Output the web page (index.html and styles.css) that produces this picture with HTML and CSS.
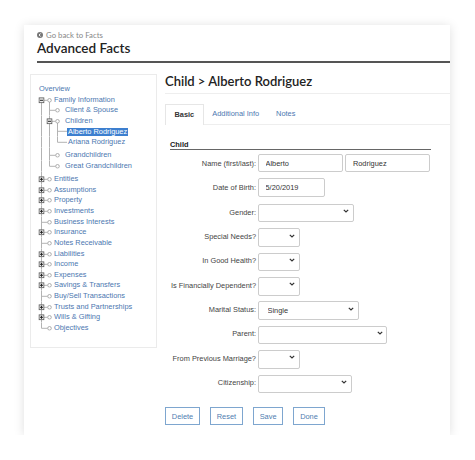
FILE: index.html
```html
<!DOCTYPE html>
<html lang="en">
<head>
  <meta charset="UTF-8">
  <meta name="viewport" content="width=device-width, initial-scale=1.0">
  <title>Advanced Facts</title>
  <link rel="stylesheet" href="styles.css">
</head>
<body>

  <!-- shared tree glyphs -->
  <svg class="defs" aria-hidden="true">
    <symbol id="plus" viewBox="0 0 6 6"><rect x=".5" y=".5" width="5" height="5" fill="#eee" stroke="#555"/><path d="M1.5 3h3M3 1.5v3" stroke="#222"/></symbol>
    <symbol id="minus" viewBox="0 0 6 6"><rect x=".5" y=".5" width="5" height="5" fill="#eee" stroke="#555"/><path d="M1.5 3h3" stroke="#222"/></symbol>
    <symbol id="node" viewBox="0 0 5 5"><circle cx="2.5" cy="2.5" r="1.8" fill="#fff" stroke="#999" stroke-width=".8"/></symbol>
  </svg>

  <div class="card">

    <!-- Header -->
    <div class="header">
      <a class="back" href="#">
        <svg width="6" height="6" viewBox="0 0 6 6"><circle cx="3" cy="3" r="3" fill="#777"/><path d="M3.6 1.5L2.1 3l1.5 1.5" stroke="#fff" stroke-width="1" fill="none"/></svg>
        Go back to Facts
      </a>
      <h1>Advanced Facts</h1>
    </div>

    <div class="body">

      <!-- Tree -->
      <div class="sidebar">
        <div class="row top"><span class="label">Overview</span></div>

        <div class="row"><svg class="ln" width="17" height="10.65"><path d="M4.5 5.3V10.65M7 5.3H10.5M12.5 7V10.65"/><use href="#minus" x="1.5" y="2.3" width="6" height="6"/><use href="#node" x="10" y="2.8" width="5" height="5"/></svg><span class="label">Family Information</span></div>
        <div class="row"><svg class="ln" width="28" height="10.65"><path d="M4.5 0V10.65M12.5 0V10.65M12.5 5.3H18.5"/><use href="#node" x="18" y="2.8" width="5" height="5"/></svg><span class="label">Client &amp; Spouse</span></div>
        <div class="row"><svg class="ln" width="28" height="10.65"><path d="M4.5 0V10.65M12.5 0V10.65M15 5.3H18.5M20.5 7V10.65"/><use href="#minus" x="9.5" y="2.3" width="6" height="6"/><use href="#node" x="18" y="2.8" width="5" height="5"/></svg><span class="label">Children</span></div>
        <div class="row"><svg class="ln" width="30" height="10.65"><path d="M4.5 0V10.65M12.5 0V10.65M20.5 0V10.65M20.5 5.3H30"/></svg><span class="label selected">Alberto Rodriguez</span></div>
        <div class="row"><svg class="ln" width="30" height="10.65"><path d="M4.5 0V10.65M12.5 0V10.65M20.5 0V5.3H30"/></svg><span class="label leaf">Ariana Rodriguez</span></div>
        <div class="gap"><svg class="ln" width="28" height="2.5"><path d="M4.5 0V2.5M12.5 0V2.5"/></svg></div>
        <div class="row"><svg class="ln" width="28" height="10.65"><path d="M4.5 0V10.65M12.5 0V10.65M12.5 5.3H18.5"/><use href="#node" x="18" y="2.8" width="5" height="5"/></svg><span class="label">Grandchildren</span></div>
        <div class="row"><svg class="ln" width="28" height="10.65"><path d="M4.5 0V10.65M12.5 0V5.3H18.5"/><use href="#node" x="18" y="2.8" width="5" height="5"/></svg><span class="label">Great Grandchildren</span></div>
        <div class="gap"><svg class="ln" width="17" height="2.5"><path d="M4.5 0V2.5"/></svg></div>

        <div class="row"><svg class="ln" width="17" height="10.65"><path d="M4.5 0V10.65M7 5.3H10.5"/><use href="#plus" x="1.5" y="2.3" width="6" height="6"/><use href="#node" x="10" y="2.8" width="5" height="5"/></svg><span class="label">Entities</span></div>
        <div class="row"><svg class="ln" width="17" height="10.65"><path d="M4.5 0V10.65M7 5.3H10.5"/><use href="#plus" x="1.5" y="2.3" width="6" height="6"/><use href="#node" x="10" y="2.8" width="5" height="5"/></svg><span class="label">Assumptions</span></div>
        <div class="row"><svg class="ln" width="17" height="10.65"><path d="M4.5 0V10.65M7 5.3H10.5"/><use href="#plus" x="1.5" y="2.3" width="6" height="6"/><use href="#node" x="10" y="2.8" width="5" height="5"/></svg><span class="label">Property</span></div>
        <div class="row"><svg class="ln" width="17" height="10.65"><path d="M4.5 0V10.65M7 5.3H10.5"/><use href="#plus" x="1.5" y="2.3" width="6" height="6"/><use href="#node" x="10" y="2.8" width="5" height="5"/></svg><span class="label">Investments</span></div>
        <div class="row"><svg class="ln" width="17" height="10.65"><path d="M4.5 0V10.65M4.5 5.3H10.5"/><use href="#node" x="10" y="2.8" width="5" height="5"/></svg><span class="label">Business Interests</span></div>
        <div class="row"><svg class="ln" width="17" height="10.65"><path d="M4.5 0V10.65M7 5.3H10.5"/><use href="#plus" x="1.5" y="2.3" width="6" height="6"/><use href="#node" x="10" y="2.8" width="5" height="5"/></svg><span class="label">Insurance</span></div>
        <div class="row"><svg class="ln" width="17" height="10.65"><path d="M4.5 0V10.65M4.5 5.3H10.5"/><use href="#node" x="10" y="2.8" width="5" height="5"/></svg><span class="label">Notes Receivable</span></div>
        <div class="row"><svg class="ln" width="17" height="10.65"><path d="M4.5 0V10.65M7 5.3H10.5"/><use href="#plus" x="1.5" y="2.3" width="6" height="6"/><use href="#node" x="10" y="2.8" width="5" height="5"/></svg><span class="label">Liabilities</span></div>
        <div class="row"><svg class="ln" width="17" height="10.65"><path d="M4.5 0V10.65M7 5.3H10.5"/><use href="#plus" x="1.5" y="2.3" width="6" height="6"/><use href="#node" x="10" y="2.8" width="5" height="5"/></svg><span class="label">Income</span></div>
        <div class="row"><svg class="ln" width="17" height="10.65"><path d="M4.5 0V10.65M7 5.3H10.5"/><use href="#plus" x="1.5" y="2.3" width="6" height="6"/><use href="#node" x="10" y="2.8" width="5" height="5"/></svg><span class="label">Expenses</span></div>
        <div class="row"><svg class="ln" width="17" height="10.65"><path d="M4.5 0V10.65M7 5.3H10.5"/><use href="#plus" x="1.5" y="2.3" width="6" height="6"/><use href="#node" x="10" y="2.8" width="5" height="5"/></svg><span class="label">Savings &amp; Transfers</span></div>
        <div class="row"><svg class="ln" width="17" height="10.65"><path d="M4.5 0V10.65M4.5 5.3H10.5"/><use href="#node" x="10" y="2.8" width="5" height="5"/></svg><span class="label">Buy/Sell Transactions</span></div>
        <div class="row"><svg class="ln" width="17" height="10.65"><path d="M4.5 0V10.65M7 5.3H10.5"/><use href="#plus" x="1.5" y="2.3" width="6" height="6"/><use href="#node" x="10" y="2.8" width="5" height="5"/></svg><span class="label">Trusts and Partnerships</span></div>
        <div class="row"><svg class="ln" width="17" height="10.65"><path d="M4.5 0V10.65M7 5.3H10.5"/><use href="#plus" x="1.5" y="2.3" width="6" height="6"/><use href="#node" x="10" y="2.8" width="5" height="5"/></svg><span class="label">Wills &amp; Gifting</span></div>
        <div class="row"><svg class="ln" width="17" height="10.65"><path d="M4.5 0V5.3H10.5"/><use href="#node" x="10" y="2.8" width="5" height="5"/></svg><span class="label">Objectives</span></div>
      </div>

      <!-- Detail -->
      <div class="main">
        <h2>Child &gt; Alberto Rodriguez</h2>

        <div class="tabs">
          <a class="tab active" href="#">Basic</a>
          <a class="tab" href="#">Additional Info</a>
          <a class="tab" href="#">Notes</a>
        </div>

        <div class="section">
          <div class="section-title">Child</div>

          <div class="field">
            <label>Name (first/last):</label>
            <div class="controls">
              <input class="w-name" type="text" value="Alberto">
              <input class="w-name" type="text" value="Rodriguez">
            </div>
          </div>

          <div class="field">
            <label>Date of Birth:</label>
            <div class="controls"><input class="w-date" type="text" value="5/20/2019"></div>
          </div>

          <div class="field">
            <label>Gender:</label>
            <div class="controls"><span class="sel w-gender"><select><option></option></select><svg class="chev" width="6" height="4" viewBox="0 0 6 4"><path d="M.8.8L3 3 5.2.8"/></svg></span></div>
          </div>

          <div class="field">
            <label>Special Needs?</label>
            <div class="controls"><span class="sel w-yn"><select><option></option></select><svg class="chev" width="6" height="4" viewBox="0 0 6 4"><path d="M.8.8L3 3 5.2.8"/></svg></span></div>
          </div>

          <div class="field">
            <label>In Good Health?</label>
            <div class="controls"><span class="sel w-yn"><select><option></option></select><svg class="chev" width="6" height="4" viewBox="0 0 6 4"><path d="M.8.8L3 3 5.2.8"/></svg></span></div>
          </div>

          <div class="field">
            <label>Is Financially Dependent?</label>
            <div class="controls"><span class="sel w-yn"><select><option></option></select><svg class="chev" width="6" height="4" viewBox="0 0 6 4"><path d="M.8.8L3 3 5.2.8"/></svg></span></div>
          </div>

          <div class="field">
            <label>Marital Status:</label>
            <div class="controls"><span class="sel w-marital"><select><option>Single</option></select><svg class="chev" width="6" height="4" viewBox="0 0 6 4"><path d="M.8.8L3 3 5.2.8"/></svg></span></div>
          </div>

          <div class="field">
            <label>Parent:</label>
            <div class="controls"><span class="sel w-parent"><select><option></option></select><svg class="chev" width="6" height="4" viewBox="0 0 6 4"><path d="M.8.8L3 3 5.2.8"/></svg></span></div>
          </div>

          <div class="field">
            <label>From Previous Marriage?</label>
            <div class="controls"><span class="sel w-yn"><select><option></option></select><svg class="chev" width="6" height="4" viewBox="0 0 6 4"><path d="M.8.8L3 3 5.2.8"/></svg></span></div>
          </div>

          <div class="field">
            <label>Citizenship:</label>
            <div class="controls"><span class="sel w-citizen"><select><option></option></select><svg class="chev" width="6" height="4" viewBox="0 0 6 4"><path d="M.8.8L3 3 5.2.8"/></svg></span></div>
          </div>
        </div>

        <div class="actions">
          <button>Delete</button>
          <button>Reset</button>
          <button>Save</button>
          <button>Done</button>
        </div>
      </div>
    </div>
  </div>

</body>
</html>
```

FILE: styles.css
```css
body {
  margin: 0;
  padding: 0;
  background-color: #fff;
  font-family: "Liberation Sans", Arial, sans-serif;
  color: #444;
}
.defs {
  position: absolute;
  width: 0;
  height: 0;
}
.card {
  margin: 25px 0 0 24px;
  width: 426px;
  padding: 5px 0 10px;
  background-color: #fff;
  box-shadow: 0 1px 10px rgba(0, 0, 0, 0.13);
}

/* Header */
.header {
  margin-left: 13px;
  border-bottom: 2px solid #555;
}
.header .back {
  display: flex;
  align-items: center;
  gap: 3px;
  height: 10px;
  font-family: Lato, sans-serif;
  font-size: 7.8px;
  color: #888;
  text-decoration: none;
}
.header h1 {
  margin: 0;
  padding-bottom: 5px;
  font-family: Lato, sans-serif;
  font-size: 13.5px;
  line-height: 16px;
  font-weight: 600;
  color: #222;
}

.body {
  display: flex;
  align-items: flex-start;
  margin-top: 10.5px;
}

/* Tree */
.sidebar {
  margin-left: 6px;
  width: 119px;
  height: 263px;
  padding: 9.4px 0 0 6px;
  border: 1px solid #ebebeb;
  font-size: 7.4px;
  color: #4b77b0;
}
.row {
  display: flex;
  align-items: center;
  height: 10.65px;
  line-height: 10.65px;
  white-space: nowrap;
}
.row.top .label {
  padding-left: 2px;
}
.gap {
  height: 2.5px;
  display: flex;
}
.ln {
  flex: none;
  display: block;
}
.ln path {
  stroke: #b3b3b3;
  stroke-width: 1;
  fill: none;
}
.label.selected,
.label.leaf {
  display: inline-block;
  padding: 0 1px;
  height: 8.5px;
  line-height: 8.5px;
}
.label.selected {
  background-color: #3d7fcf;
  color: #fff;
}

/* Detail */
.main {
  margin-left: 8px;
  flex: 1;
}
.main h2 {
  margin: 0;
  padding-bottom: 5px;
  border-bottom: 1px solid #eee;
  font-family: Lato, sans-serif;
  font-size: 13px;
  line-height: 14px;
  font-weight: 600;
  color: #222;
}
.tabs {
  display: flex;
  margin-top: 10.3px;
  border-bottom: 1px solid #eee;
  height: 20.7px;
}
.tab {
  padding: 0 8.5px;
  line-height: 20.7px;
  font-size: 7.4px;
  color: #4b77b0;
  text-decoration: none;
}
.tab.active {
  border: 1px solid #e6e6e6;
  border-bottom: none;
  background-color: #fff;
  height: 21px;
  line-height: 20px;
  color: #333;
  font-weight: bold;
  box-sizing: border-box;
}

.section {
  margin: 14.5px 0 0 5px;
  width: 261px;
  padding-bottom: 0.1px;
}
.section-title {
  font-size: 7.4px;
  line-height: 9.5px;
  font-weight: bold;
  color: #222;
  border-bottom: 1px solid #666;
  margin-bottom: 3.5px;
}
.field {
  display: flex;
  align-items: center;
  height: 18.5px;
  margin-bottom: 5.9px;
}
.field label {
  width: 86px;
  padding-right: 2px;
  text-align: right;
  font-size: 7.4px;
  color: #444;
  white-space: nowrap;
}
.controls {
  display: flex;
  gap: 2.4px;
}
input[type="text"],
select {
  box-sizing: border-box;
  height: 18.5px;
  border: 1px solid #ccc;
  border-radius: 2px;
  background-color: #fff;
  font-family: "Liberation Sans", Arial, sans-serif;
  font-size: 7.4px;
  color: #333;
  outline: none;
}
input[type="text"] {
  padding: 0 0 0 6.5px;
}
.w-name { width: 85px; }
.w-date { width: 66.7px; }

.sel {
  position: relative;
  display: block;
}
.sel select {
  width: 100%;
  appearance: none;
  -webkit-appearance: none;
  padding: 0 0 0 8.5px;
}
.chev {
  position: absolute;
  right: 4.5px;
  top: 7.5px;
}
.chev path {
  stroke: #333;
  stroke-width: 1.2;
  fill: none;
}
.w-gender { width: 95.7px; }
.w-yn { width: 41.7px; }
.w-marital { width: 100.7px; }
.w-parent { width: 129px; }
.w-citizen { width: 93.7px; }

.actions {
  display: flex;
  gap: 10px;
  margin-top: 8.8px;
}
button {
  height: 18.7px;
  padding: 0 5.8px;
  border: 1.3px solid #7ea6cf;
  background-color: #fff;
  font-family: "Liberation Sans", Arial, sans-serif;
  font-size: 7.4px;
  color: #4f7db0;
}
```
